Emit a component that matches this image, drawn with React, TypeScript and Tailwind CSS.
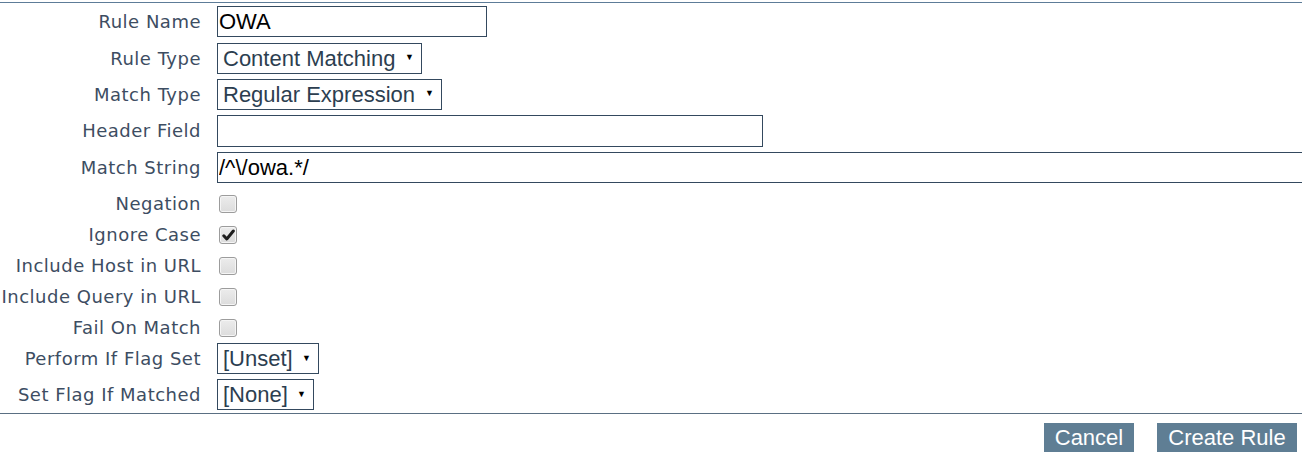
const labelCls =
  "w-[201px] shrink-0 text-right text-[18px] text-[#3d4d62] font-['DejaVu_Sans',sans-serif] tracking-[0.5px] whitespace-nowrap";

const Select = ({ value, w }: { value: string; w: string }) => (
  <div
    className={`${w} h-[31px] border border-[#34495e] flex items-center pl-[5px] pr-[7px] justify-between text-[22px] text-[#2c3e50] font-['Liberation_Sans',Arial,sans-serif]`}
  >
    <span>{value}</span>
    <span className="text-[9px] text-black">▼</span>
  </div>
);

const Check = ({ checked }: { checked?: boolean }) => (
  <div className="w-[18px] h-[18px] rounded-[3px] border border-[#9c9c9c] bg-gradient-to-b from-[#ececec] to-[#dcdcdc] flex items-center justify-center shadow-[inset_0_0_0_1px_#f5f5f5]">
    {checked && (
      <svg width="13" height="12" viewBox="0 0 13 12">
        <path d="M1.8 6.8 L4.8 10 L11.3 2" fill="none" stroke="#1e1e1e" strokeWidth="3" strokeLinecap="round" strokeLinejoin="round" />
      </svg>
    )}
  </div>
);

const TextRow = ({ label, children }: { label: string; children: React.ReactNode }) => (
  <div className="flex items-start h-[36.5px] gap-4">
    <div className={`${labelCls} h-[31px] leading-[32px]`}>{label}</div>
    {children}
  </div>
);

const CheckRow = ({ label, checked }: { label: string; checked?: boolean }) => (
  <div className="flex items-center h-[31px] gap-4">
    <div className={labelCls}>{label}</div>
    <div className="pl-[2px]">
      <Check checked={checked} />
    </div>
  </div>
);

const SelectRow = ({ label, value, w }: { label: string; value: string; w: string }) => (
  <div className="flex items-start h-[36px] gap-4">
    <div className={`${labelCls} h-[31px] leading-[32px]`}>{label}</div>
    <Select value={value} w={w} />
  </div>
);

const inputCls =
  "h-[31px] shrink-0 border border-[#34495e] px-[1px] text-[22px] text-black font-['Liberation_Sans',Arial,sans-serif] outline-none";

export default function App() {
  return (
    <div className="w-[1302px] h-[463px] bg-white overflow-hidden">
      <div className="mt-[2px] h-px bg-[#5d7c98]" />
      <div className="pt-[3px]">
        <TextRow label="Rule Name">
          <input readOnly value="OWA" className={`${inputCls} w-[270px]`} />
        </TextRow>
        <SelectRow label="Rule Type" value="Content Matching" w="w-[205px]" />
        <TextRow label="Match Type">
          <Select value="Regular Expression" w="w-[225px]" />
        </TextRow>
        <TextRow label="Header Field">
          <input readOnly value="" className={`${inputCls} w-[546px] h-[32px]`} />
        </TextRow>
        <div className="flex items-start h-[36.5px] gap-4">
          <div className={`${labelCls} h-[31px] leading-[32px]`}>Match String</div>
          <input readOnly value="/^\/owa.*/" className={`${inputCls} w-[1100px]`} />
        </div>
        <CheckRow label="Negation" />
        <CheckRow label="Ignore Case" checked />
        <CheckRow label="Include Host in URL" />
        <CheckRow label="Include Query in URL" />
        <CheckRow label="Fail On Match" />
        <SelectRow label="Perform If Flag Set" value="[Unset]" w="w-[102px]" />
        <SelectRow label="Set Flag If Matched" value="[None]" w="w-[97px]" />
      </div>
      <div className="-mt-[2px] h-px bg-[#5a6f82]" />
      <div className="flex justify-end gap-[23px] pr-[5px] pt-[9px]">
        <button className="w-[90px] h-[29px] bg-[#5f7e94] text-white text-[22px] leading-[29px] font-['Liberation_Sans',Arial,sans-serif]">
          Cancel
        </button>
        <button className="w-[140px] h-[29px] bg-[#5f7e94] text-white text-[22px] leading-[29px] font-['Liberation_Sans',Arial,sans-serif]">
          Create Rule
        </button>
      </div>
    </div>
  );
}
